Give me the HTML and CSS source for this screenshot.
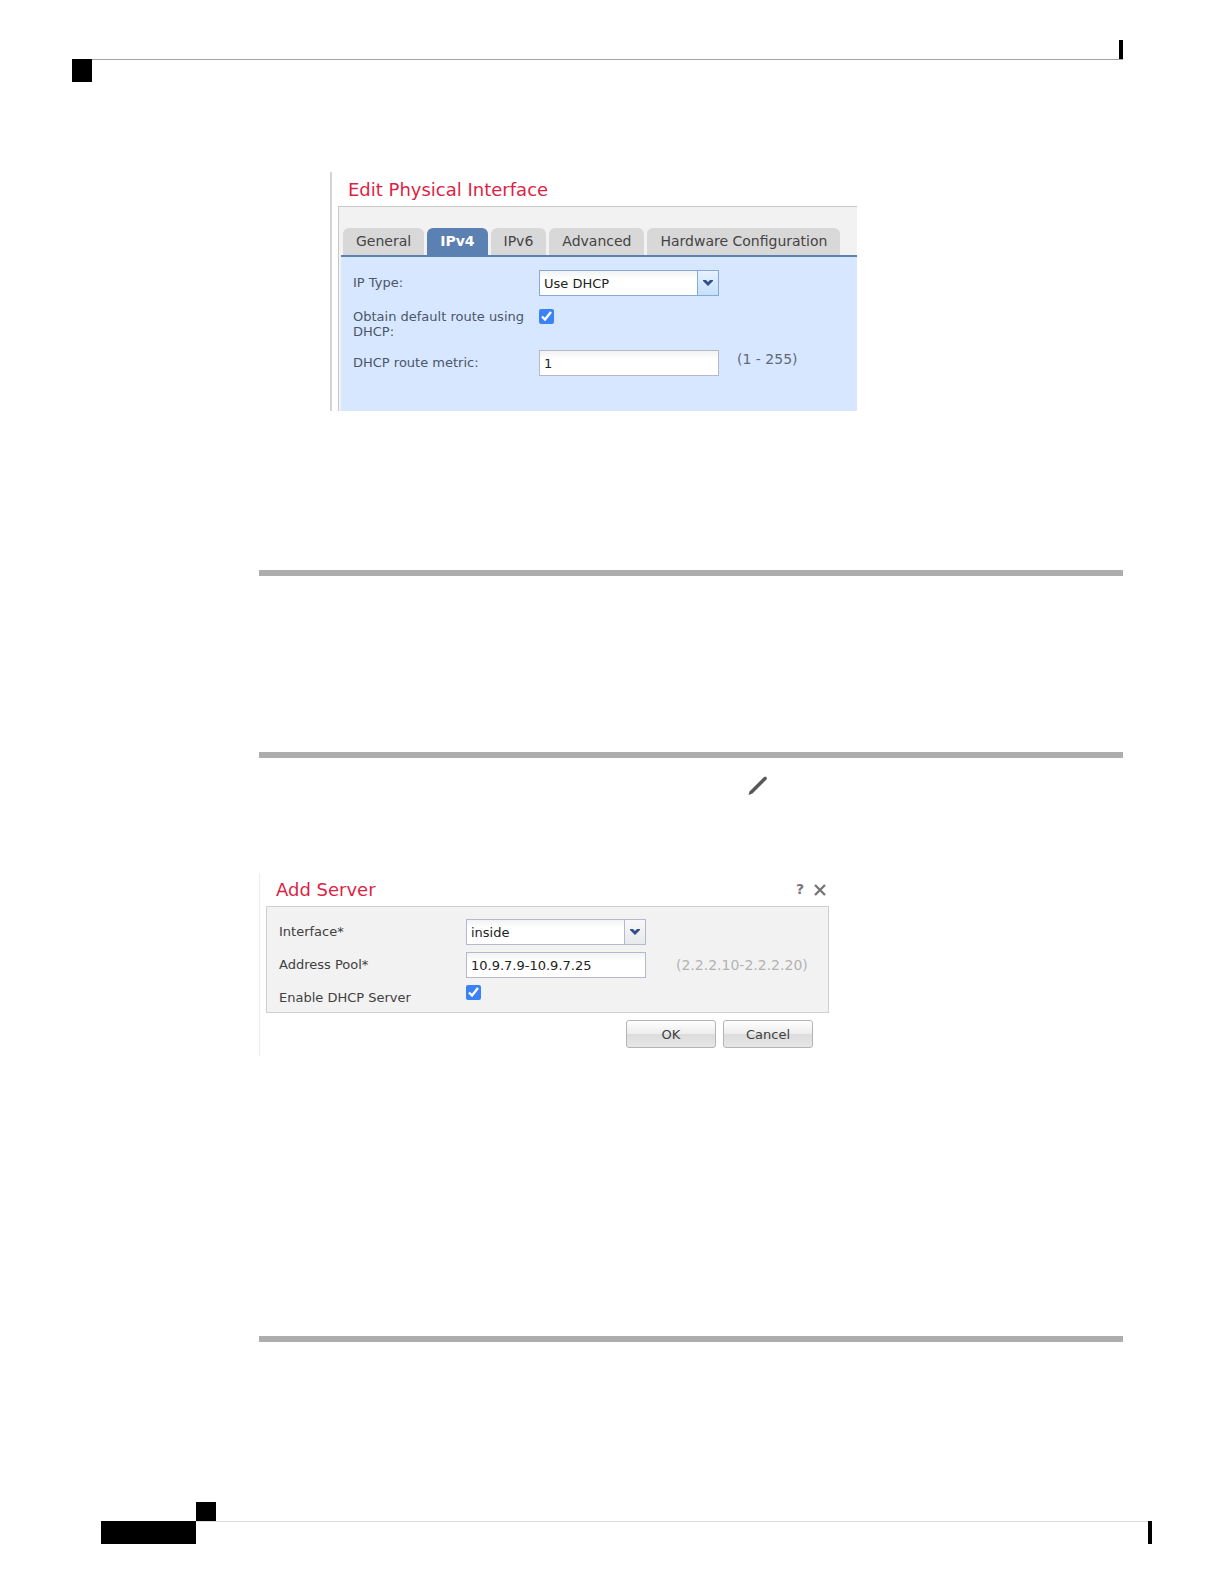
FILE: index.html
```
<!DOCTYPE html>
<html lang="en">
<head>
  <meta charset="UTF-8">
  <meta name="viewport" content="width=device-width, initial-scale=1.0">
  <title>Edit Physical Interface</title>
  <link rel="stylesheet" href="styles.css">
</head>
<body>
<header class="page-header">
  <div class="header-bar"></div>
  <div class="header-square"></div>
</header>

<main class="content">
  <section class="interface-panel">
    <h1 class="title">Edit Physical Interface</h1>
    <div class="interface-box">
      <div class="tabs" role="tablist">
        <button type="button" class="tab" role="tab">General</button>
        <button type="button" class="tab active" role="tab" aria-selected="true">IPv4</button>
        <button type="button" class="tab" role="tab">IPv6</button>
        <button type="button" class="tab" role="tab">Advanced</button>
        <button type="button" class="tab" role="tab">Hardware Configuration</button>
      </div>
      <form class="interface-form">
        <div class="row">
          <label for="ipType">IP Type:</label>
          <div class="combo focused">
            <select id="ipType"><option>Use DHCP</option></select>
            <span class="combo-arrow"><svg width="10" height="7" viewBox="0 0 10 7"><path d="M0 0h3l2 2 2-2h3v1L5 6 0 1z"/></svg></span>
          </div>
        </div>
        <div class="row row-tall">
          <label for="defaultRoute">Obtain default route using DHCP:</label>
          <input type="checkbox" id="defaultRoute" checked>
        </div>
        <div class="row">
          <label for="metric">DHCP route metric:</label>
          <input type="text" id="metric" value="1">
          <span class="hint range">(1 - 255)</span>
        </div>
      </form>
    </div>
  </section>

  <hr class="rule">
  <hr class="rule rule-second">

  <div class="edit-line">
    <svg class="pencil" width="20" height="20" viewBox="0 0 20 20">
      <path d="M0.5 19L1.5 15.5 16 1 17.5 0.5 19 2 18.5 3.5 4.5 17.5z" fill="#58585a"/>
    </svg>
  </div>

  <section class="server-panel">
    <div class="server-head">
      <h2 class="title">Add Server</h2>
      <button type="button" class="icon-btn" aria-label="Help">?</button>
      <button type="button" class="icon-btn" aria-label="Close">
        <svg width="12" height="12" viewBox="0 0 12 12"><path d="M1 1l10 10M11 1L1 11" stroke="#777" stroke-width="2.4"/></svg>
      </button>
    </div>
    <form class="server-form">
      <div class="row">
        <label for="iface">Interface*</label>
        <div class="combo">
          <select id="iface"><option>inside</option></select>
          <span class="combo-arrow"><svg width="10" height="7" viewBox="0 0 10 7"><path d="M0 0h3l2 2 2-2h3v1L5 6 0 1z"/></svg></span>
        </div>
      </div>
      <div class="row">
        <label for="pool">Address Pool*</label>
        <input type="text" id="pool" value="10.9.7.9-10.9.7.25">
        <span class="hint">(2.2.2.10-2.2.2.20)</span>
      </div>
      <div class="row">
        <label for="enable">Enable DHCP Server</label>
        <input type="checkbox" id="enable" checked>
      </div>
    </form>
    <div class="actions">
      <button type="button" class="btn">OK</button>
      <button type="button" class="btn">Cancel</button>
    </div>
  </section>

  <hr class="rule rule-last">
</main>

<footer class="page-footer">
  <div class="footer-square"></div>
  <div class="footer-line">
    <div class="footer-block"></div>
    <div class="footer-bar"></div>
  </div>
</footer>
</body>
</html>
```

FILE: styles.css
```
* {
  margin: 0;
  padding: 0;
  box-sizing: border-box;
}

body {
  font-family: 'DejaVu Sans', Verdana, sans-serif;
  font-size: 13px;
  line-height: 15px;
  color: #404040;
  background: #fff;
}

button, input, select {
  font: inherit;
  color: inherit;
}

/* page frame */
.page-header {
  margin: 40px 101px 0 72px;
}

.header-bar {
  width: 4px;
  height: 19px;
  margin-left: auto;
  background: #000;
}

.header-square {
  height: 23px;
  border-top: 1px solid #a5a5a5;
}

.header-square::before {
  content: '';
  display: block;
  width: 20px;
  height: 23px;
  margin-top: -1px;
  background: #000;
}

.content {
  padding: 90px 101px 0 259px;
}

.rule {
  border: none;
  height: 6px;
  background: #adadad;
}

.rule-second {
  margin-top: 176px;
}

.rule-last {
  margin-top: 280px;
}

.title {
  font-size: 18px;
  font-weight: normal;
  line-height: 32px;
  color: #dc1f45;
}

/* edit interface */
.interface-panel {
  max-width: 527px;
  height: 239px;
  margin: 0 0 159px 71px;
  padding-left: 6px;
  border-left: 2px solid #d4d4d6;
}

.interface-panel .title {
  padding: 2px 0 0 10px;
}

.interface-box {
  height: 205px;
  padding: 21px 0 0 2px;
  background: #f2f2f2;
  border-top: 1px solid #c8c8c8;
  border-left: 1px solid #c8c8c8;
}

.tabs {
  display: flex;
  gap: 3px;
  padding-left: 2px;
  border-bottom: 2px solid #5b80b2;
}

.tab {
  height: 27px;
  padding: 0 13px;
  color: #444;
  font-size: 14px;
  background: #d8d8d8;
  border: none;
  border-radius: 6px 6px 0 0;
  white-space: nowrap;
}

.tab.active {
  color: #fff;
  font-weight: bold;
  background: #5b80b2;
}

.interface-form {
  display: flex;
  flex-direction: column;
  gap: 12px;
  height: 154px;
  padding: 13px 0 0 12px;
  color: #4b5668;
  background: #d7e7ff;
}

.row {
  display: grid;
  grid-template-columns: 186px 180px 1fr;
  align-items: center;
  min-height: 26px;
}

.row label {
  padding-bottom: 2px;
}

.row-tall {
  min-height: 30px;
  align-items: start;
}

.interface-form .row-tall {
  height: 30px;
  padding-top: 1px;
}

.row input[type="text"],
.combo {
  width: 180px;
  height: 26px;
  color: #222;
  background: linear-gradient(#f1f2f2, #fff 8px);
  border: 1px solid #b5b8c8;
}

.row input[type="text"] {
  padding: 0 4px;
}

.combo {
  display: flex;
  position: relative;
}

.combo select {
  flex: 1;
  padding: 0 26px 0 4px;
  appearance: none;
  background: none;
  border: none;
}

.combo-arrow {
  display: flex;
  align-items: center;
  justify-content: center;
  position: absolute;
  top: 0;
  right: 0;
  width: 21px;
  height: 24px;
  background: linear-gradient(#f8f8f9, #e8e9ec);
  border-left: 1px solid #b5b8c8;
  fill: #34508c;
  pointer-events: none;
}

.combo.focused {
  border-color: #86a9d8;
}

.combo.focused .combo-arrow {
  background: linear-gradient(#e6f2ff, #c5e0fb);
  border-color: #86a9d8;
}

.row input[type="checkbox"] {
  align-self: start;
  width: 15px;
  height: 15px;
  accent-color: #3b82f6;
}

.hint {
  padding-left: 30px;
  color: #b3b3b3;
  font-size: 14px;
}

.hint.range {
  padding: 0 0 8px 18px;
  color: #5f6978;
}

.edit-line {
  display: flex;
  padding: 18px 0 77px 489px;
}

/* add server */
.server-panel {
  max-width: 570px;
  height: 183px;
  padding-left: 6px;
  border-left: 1px solid #ececec;
}

.server-head {
  display: flex;
  align-items: center;
  gap: 8px;
  height: 33px;
  padding: 0 3px 0 10px;
}

.server-head .title {
  flex: 1;
}

.icon-btn {
  display: flex;
  align-items: center;
  justify-content: center;
  min-width: 12px;
  height: 16px;
  color: #777;
  font-size: 14px;
  font-weight: bold;
  background: none;
  border: none;
}

.server-form {
  display: flex;
  flex-direction: column;
  gap: 7px;
  height: 107px;
  padding: 12px 0 0 12px;
  background: #f2f2f2;
  border: 1px solid #cfcfcf;
}

.server-form .row {
  grid-template-columns: 187px 180px 1fr;
}

.actions {
  display: flex;
  justify-content: flex-end;
  gap: 7px;
  padding: 7px 16px 0 0;
}

.btn {
  width: 90px;
  height: 28px;
  background: linear-gradient(#fff, #ececec 50%, #dcdcdc 50%, #e6e6e6);
  border: 1px solid #b4b4b4;
  border-radius: 3px;
}

.page-footer {
  margin: 160px 72px 0 101px;
}

.footer-square {
  width: 20px;
  height: 19px;
  margin-left: 95px;
  background: #000;
}

.footer-line {
  display: flex;
  justify-content: space-between;
  background: linear-gradient(#dcdcdc 1px, #fff 1px);
}

.footer-block {
  width: 95px;
  height: 23px;
  background: #000;
}

.footer-bar {
  width: 4px;
  height: 23px;
  background: #000;
}
```
